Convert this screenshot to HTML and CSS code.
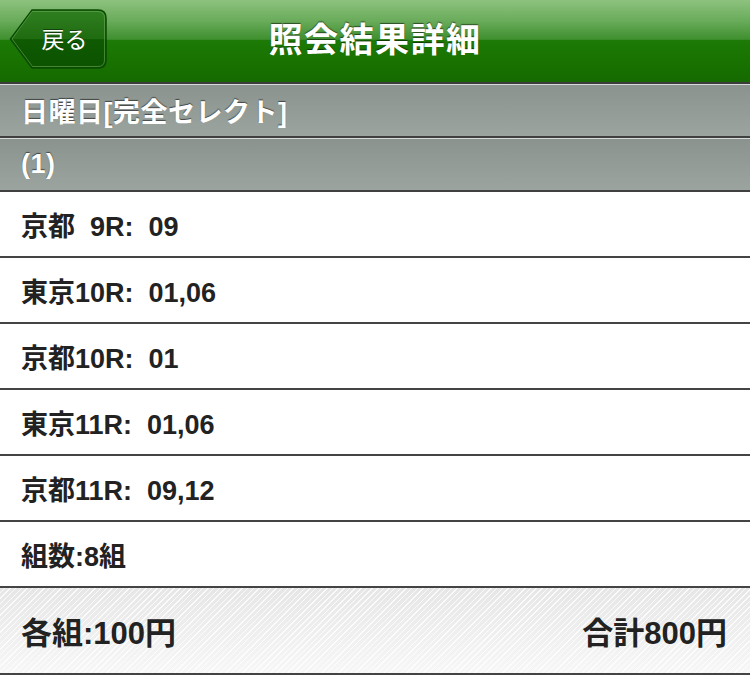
FILE: index.html
```html
<!DOCTYPE html>
<html lang="ja">
<head>
<meta charset="utf-8">
<title>照会結果詳細</title>
<link rel="stylesheet" href="styles.css">
</head>
<body>
<header class="navbar">
  <div class="nav-left">
    <a class="back-btn" href="#">
      <svg class="back-shape" width="99" height="60" viewBox="0 0 99 60">
        <defs>
          <linearGradient id="bg" x1="0" y1="0" x2="0" y2="1">
            <stop offset="0" stop-color="#2f7f20"/>
            <stop offset="0.5" stop-color="#1f6c10"/>
            <stop offset="0.51" stop-color="#0f5a02"/>
            <stop offset="1" stop-color="#0c5200"/>
          </linearGradient>
        </defs>
        <path d="M23 1 H89 Q97 1 97 9 V51 Q97 59 89 59 H23 L1.5 30 Z" fill="url(#bg)" stroke="#0a4a00" stroke-width="1.5"/>
        <path d="M23 2.5 H89 Q95.5 2.5 95.5 9 V51 Q95.5 57.5 89 57.5 H23.5 L3 30 Z" fill="none" stroke="#6fae5c" stroke-opacity="0.55" stroke-width="1"/>
      </svg>
      <span class="back-label">戻る</span>
    </a>
  </div>
  <h1 class="nav-title">照会結果詳細</h1>
  <div class="nav-right"></div>
</header>

<div class="group-head">日曜日[完全セレクト]</div>
<div class="group-head">(1)</div>

<ul class="list">
  <li class="row">京都&nbsp;&nbsp;9R:&nbsp;&nbsp;09</li>
  <li class="row">東京10R:&nbsp;&nbsp;01,06</li>
  <li class="row">京都10R:&nbsp;&nbsp;01</li>
  <li class="row">東京11R:&nbsp;&nbsp;01,06</li>
  <li class="row">京都11R:&nbsp;&nbsp;09,12</li>
  <li class="row">組数:8組</li>
</ul>

<footer class="summary">
  <span class="summary-item">各組:100円</span>
  <span class="summary-item">合計800円</span>
</footer>
</body>
</html>
```

FILE: styles.css
```css
html, body {
  margin: 0;
  padding: 0;
  background: #ffffff;
}

body {
  width: 750px;
  height: 675px;
  overflow: hidden;
  font-family: "Liberation Sans", "Noto Sans CJK JP", sans-serif;
  color: #222222;
}

.navbar {
  height: 82px;
  display: grid;
  grid-template-columns: 1fr auto 1fr;
  align-items: center;
  background: linear-gradient(to bottom,
    #8dc27e 0%,
    #6aac5b 25%,
    #3f8f2f 48%,
    #1d7a06 49%,
    #187200 75%,
    #166a00 100%);
  border-bottom: 2px solid #3c3c3c;
}

.nav-left {
  display: flex;
  align-items: center;
  padding-left: 9px;
  margin-top: -4px;
}

.back-btn {
  position: relative;
  width: 99px;
  height: 60px;
  display: flex;
  align-items: center;
  justify-content: center;
  text-decoration: none;
}

.back-shape {
  position: absolute;
  left: 0;
  top: 0;
}

.back-label {
  position: relative;
  padding-left: 12px;
  margin-top: -3px;
  font-family: "Noto Sans CJK JP", sans-serif;
  font-size: 23px;
  font-weight: 400;
  color: #ffffff;
  text-shadow: 0 -1px 0 rgba(0, 0, 0, 0.45);
}

.nav-title {
  margin: 0;
  margin-top: -7px;
  font-family: "Noto Sans CJK JP", sans-serif;
  font-size: 34px;
  font-weight: 700;
  color: #ffffff;
  letter-spacing: 1.5px;
  text-shadow: 0 -1px 1px rgba(0, 0, 0, 0.55);
}

.group-head {
  height: 51px;
  display: flex;
  align-items: center;
  padding-left: 21px;
  border-top: 1px solid #d6dad8;
  border-bottom: 2px solid #404040;
  background: linear-gradient(to bottom, #8a938e 0%, #9ca4a0 100%);
  color: #ffffff;
  font-size: 27px;
  font-weight: 700;
  letter-spacing: 0.5px;
  text-shadow: 0 -1px 1px rgba(0, 0, 0, 0.55);
}

.list {
  list-style: none;
  margin: 0;
  padding: 0;
}

.row {
  height: 64px;
  display: flex;
  align-items: center;
  padding-left: 21px;
  border-bottom: 2px solid #444444;
  font-size: 27px;
  font-weight: 700;
  color: #222222;
  white-space: nowrap;
}

.summary {
  height: 85px;
  display: flex;
  align-items: center;
  justify-content: space-between;
  padding: 0 23px 0 21px;
  border-bottom: 2px solid #444444;
  background:
    repeating-linear-gradient(135deg,
      rgba(255, 255, 255, 0) 0px,
      rgba(255, 255, 255, 0) 3px,
      rgba(255, 255, 255, 0.8) 3px,
      rgba(255, 255, 255, 0.8) 4px),
    linear-gradient(to bottom, #e6e6e6 0%, #f7f7f7 100%);
}

.summary-item {
  font-size: 31px;
  font-weight: 700;
  color: #222222;
}
```
